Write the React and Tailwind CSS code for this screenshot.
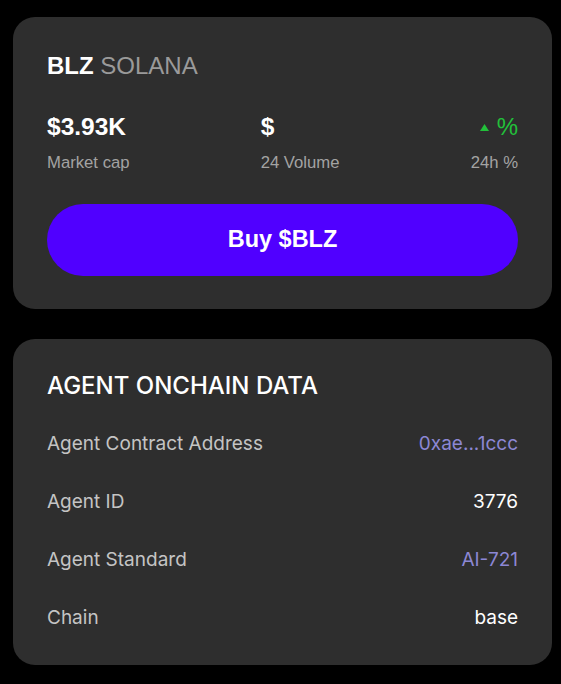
export default function App() {
  const rows = [
    { label: "Agent Contract Address", value: "0xae...1ccc", cls: "text-[#8c87d4]" },
    { label: "Agent ID", value: "3776", cls: "text-white" },
    { label: "Agent Standard", value: "AI-721", cls: "text-[#8c87d4]" },
    { label: "Chain", value: "base", cls: "text-white" },
  ];
  return (
    <div className="min-h-[684px] w-[561px] bg-black pt-[17px] px-[13px]">
      <div className="flex flex-col gap-[30px] w-[539px]">
        <div className="rounded-[22px] bg-[#2e2e2e] px-[34px] pt-[35px] pb-[33px] font-['Liberation_Sans',Arial,sans-serif]">
          <div className="text-[24px] leading-[28px]">
            <span className="text-white font-bold">BLZ</span>{" "}
            <span className="text-[#9a9a9a]">SOLANA</span>
          </div>
          <div className="mt-[33px] flex justify-between">
            <div className="flex flex-col">
              <div className="text-[24.5px] leading-[28px] font-bold text-white">$3.93K</div>
              <div className="mt-[12px] text-[16.7px] leading-[20px] text-[#a3a3a3]">Market cap</div>
            </div>
            <div className="flex flex-col">
              <div className="text-[24.5px] leading-[28px] font-bold text-white">$</div>
              <div className="mt-[12px] text-[16.7px] leading-[20px] text-[#a3a3a3]">24 Volume</div>
            </div>
            <div className="flex flex-col items-end">
              <div className="flex items-center gap-[8px] text-[24px] leading-[28px] text-[#22c03a]">
                <svg width="9" height="7" viewBox="0 0 9 7"><path d="M4.5 0L9 7H0z" fill="#22c03a" /></svg>
                <span>%</span>
              </div>
              <div className="mt-[12px] text-[16.7px] leading-[20px] text-[#a3a3a3]">24h %</div>
            </div>
          </div>
          <button className="mt-[31px] flex h-[72px] w-full items-center justify-center rounded-full bg-[#5000ff] text-[23.5px] font-bold text-white">
            Buy $BLZ
          </button>
        </div>
        <div className="rounded-[22px] bg-[#2e2e2e] px-[34px] pt-[33px] pb-[35px] font-['Inter',sans-serif]">
          <div className="text-[24px] leading-[28px] font-medium text-white">AGENT ONCHAIN DATA</div>
          <div className="mt-[32px] flex flex-col gap-[34px]">
            {rows.map((r) => (
              <div key={r.label} className="flex justify-between text-[19px] leading-[24px]">
                <span className="text-[#c4c4c4]">{r.label}</span>
                <span className={r.cls}>{r.value}</span>
              </div>
            ))}
          </div>
        </div>
      </div>
    </div>
  );
}
